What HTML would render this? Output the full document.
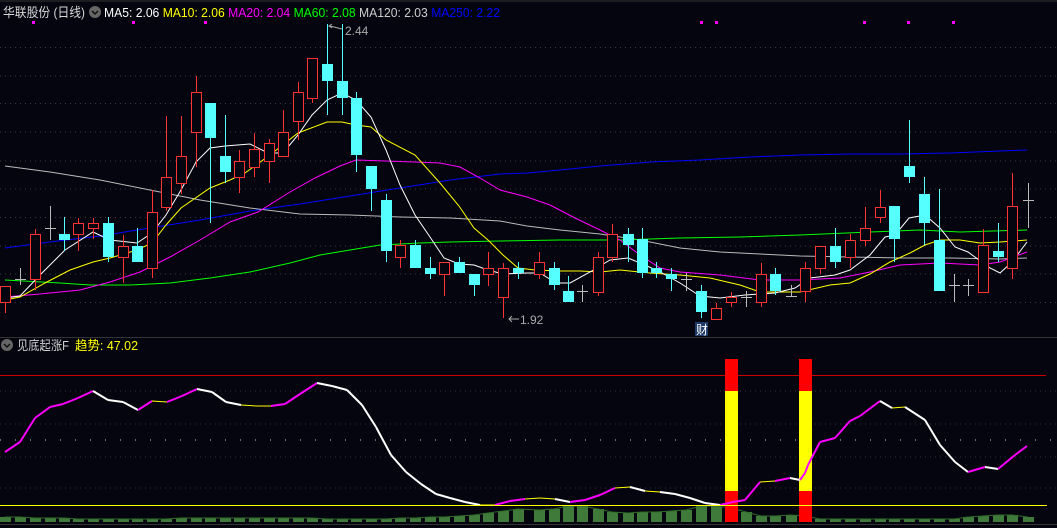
<!DOCTYPE html>
<html><head><meta charset="utf-8">
<style>
html,body{margin:0;padding:0;background:#05050f;width:1057px;height:528px;overflow:hidden}
svg{display:block}
text{font-family:"Liberation Sans","Noto Sans CJK SC",sans-serif}
</style></head><body>
<svg id="s" width="1057" height="528" xmlns="http://www.w3.org/2000/svg">
<rect width="1057" height="528" fill="#05050f"/>
<line x1="0" y1="1" x2="1057" y2="1" stroke="#333" />
<g id="grid"></g>
<g id="ma" fill="none" stroke-width="1"></g>
<g id="cd"></g>
<text x="3" y="17" font-size="13" fill="#d8d8d8" textLength="82" lengthAdjust="spacingAndGlyphs">华联股份 (日线)</text>
<circle cx="95" cy="12" r="6" fill="#666"/><path d="M92 11 L95 14 L98 11" stroke="#111" stroke-width="1.5" fill="none"/>
<text x="104" y="17" font-size="13" textLength="396" lengthAdjust="spacingAndGlyphs"><tspan fill="#fff">MA5: 2.06 </tspan><tspan fill="#ffff00"> MA10: 2.06 </tspan><tspan fill="#ff00ff"> MA20: 2.04 </tspan><tspan fill="#00ff00"> MA60: 2.08 </tspan><tspan fill="#cccccc"> MA120: 2.03 </tspan><tspan fill="#0000ff"> MA250: 2.22</tspan></text>
<g fill="#ff00ff"><rect x="32" y="21" width="3" height="3"/><rect x="132" y="21" width="3" height="3"/><rect x="204" y="21" width="3" height="3"/><rect x="700" y="21" width="3" height="3"/><rect x="715" y="21" width="3" height="3"/><rect x="863" y="21" width="3" height="3"/><rect x="907" y="21" width="3" height="3"/><rect x="952" y="21" width="3" height="3"/></g>
<text x="345" y="35" font-size="12" fill="#aaa">2.44</text>
<path d="M330 26 L342 29" stroke="#aaa" fill="none"/><path d="M332 24 L329 26 L332 28" stroke="#aaa" fill="none"/>
<text x="520" y="324" font-size="12" fill="#aaa">1.92</text>
<path d="M509 319 L519 319 M512 316 L509 319 L512 322" stroke="#aaa" fill="none"/>
<rect x="695" y="322" width="13" height="14" fill="#1e3a66"/>
<text x="696" y="334" font-size="12" fill="#fff">财</text>
<line x1="0" y1="337.5" x2="1057" y2="337.5" stroke="#333"/>
<circle cx="7" cy="345" r="6" fill="#666"/><path d="M4 344 L7 347 L10 344" stroke="#111" stroke-width="1.5" fill="none"/>
<text x="17" y="350" font-size="13" fill="#d0d0d0" textLength="52" lengthAdjust="spacingAndGlyphs">见底起涨F</text>
<text x="75" y="350" font-size="13" fill="#ffff00" textLength="63" lengthAdjust="spacingAndGlyphs">趋势: 47.02</text>
<line x1="0" y1="375.5" x2="1046" y2="375.5" stroke="#cc0000"/>
<g id="ind"></g>
<line x1="0" y1="505.5" x2="1047" y2="505.5" stroke="#ffff00"/>
<line x1="0" y1="524.5" x2="1057" y2="524.5" stroke="#333"/>
</svg>
<script>
var NS="http://www.w3.org/2000/svg";
function el(p,t,a){var e=document.createElementNS(NS,t);for(var k in a)e.setAttribute(k,a[k]);document.getElementById(p).appendChild(e);return e;}
[47.5,76,103.5,132,161,189,217.5,246,274,302.5].forEach(function(y){el("grid","line",{x1:0,x2:1057,y1:y,y2:y,stroke:"#3a3a44","stroke-dasharray":"1,4"});});
[391,424,457,488].forEach(function(y){el("grid","line",{x1:0,x2:1057,y1:y,y2:y,stroke:"#33333c","stroke-dasharray":"1,4"});});
el("grid","line",{x1:0,x2:1057,y1:440,y2:440,stroke:"#ccc","stroke-dasharray":"1,14"});
function pl(c,pts){el("ma","polyline",{stroke:c,points:pts.map(function(p){return p.join(",")}).join(" ")});}
pl("#0000ff",[[5,248],[50,242],[100,236],[150,228],[200,220],[250,211],[300,204],[350,196],[400,188],[450,180],[500,174],[527,173],[560,170],[600,166],[650,162],[700,160],[750,157],[800,155],[850,154],[900,154],[950,153],[1000,151],[1027,150]]);
pl("#bbbbbb",[[5,166],[50,172],[100,180],[150,190],[200,200],[250,208],[300,214],[350,215],[400,217],[450,218],[500,221],[527,226],[560,230],[600,234],[640,240],[680,248],[720,252],[760,254],[800,256],[850,257],[900,258],[950,258],[1000,259],[1027,258]]);
pl("#00ff00",[[5,280],[60,283],[90,285],[130,285],[170,283],[210,278],[250,272],[290,263],[320,255],[350,250],[380,245],[420,243],[450,242],[500,241],[560,240],[620,240],[680,238],[740,237],[800,235],[870,232],[920,230],[960,232],[1027,230]]);
pl("#ff00ff",[[5,297],[40,294],[80,290],[110,282],[140,272],[170,257],[200,240],[230,222],[258,212],[290,192],[315,178],[340,166],[356,160],[385,161],[415,162],[440,163],[460,167],[480,178],[500,190],[527,197],[550,205],[575,218],[600,230],[620,240],[640,255],[660,268],[680,272],[720,275],[760,280],[800,280],[840,278],[870,272],[900,265],[940,263],[980,265],[1000,262],[1027,252]]);
pl("#ffff00",[[5,300],[20,297],[45,283],[70,270],[93,262],[110,258],[137,250],[152,243],[166,225],[181,208],[210,188],[230,180],[245,173],[270,155],[298,133],[327,122],[342,122],[356,125],[371,127],[386,140],[415,155],[440,183],[459,206],[474,228],[488,240],[503,255],[518,268],[535,270],[560,271],[580,271],[600,272],[620,270],[650,273],[680,275],[710,278],[740,285],[760,292],[800,292],[830,285],[850,283],[870,274],[890,262],[910,253],[925,245],[940,240],[960,240],[980,243],[1000,242],[1027,240]]);
pl("#ffffff",[[5,298],[20,296],[40,275],[65,250],[93,232],[110,240],[137,243],[152,233],[166,215],[181,190],[196,162],[210,148],[225,146],[250,144],[268,153],[283,153],[298,135],[312,115],[327,100],[342,93],[356,100],[371,117],[386,150],[400,185],[415,215],[430,237],[444,258],[459,264],[474,265],[488,270],[503,274],[527,273],[540,273],[556,283],[570,283],[590,272],[610,260],[628,258],[645,265],[662,273],[680,283],[700,296],[720,298],[745,295],[775,293],[795,288],[810,278],[835,275],[850,270],[870,255],[885,237],[895,235],[909,218],[925,215],[940,228],[955,247],[968,252],[990,268],[1000,273],[1012,262],[1027,242]]);
var C=[[5,286,302,286,313,"r"],[20,279,279,268,285,"g"],[35,234,279,229,290,"r"],[50,228,228,206,240,"g"],[64,234,240,217,251,"c"],[78,223,234,218,251,"r"],[93,223,228,218,239,"r"],[108,223,257,217,262,"c"],[123,246,257,235,283,"r"],[137,246,262,228,262,"c"],[152,212,268,190,278,"r"],[166,177,207,116,211,"r"],[181,156,183,116,194,"r"],[196,92,132,76,167,"r"],[210,103,138,103,223,"c"],[225,156,172,115,183,"c"],[239,161,177,150,193,"r"],[254,149,167,133,177,"r"],[269,143,161,139,183,"r"],[283,132,156,110,156,"r"],[298,92,121,82,140,"r"],[312,58,98,58,103,"r"],[327,64,81,24,115,"c"],[342,81,98,24,115,"c"],[356,98,155,92,172,"c"],[371,166,189,166,211,"c"],[386,200,251,194,262,"c"],[400,245,257,240,268,"r"],[415,245,268,240,268,"c"],[430,268,274,257,279,"c"],[444,262,274,262,296,"r"],[459,262,273,257,273,"c"],[474,274,285,274,296,"c"],[488,268,274,252,286,"r"],[503,268,297,263,318,"r"],[518,268,273,262,279,"c"],[539,262,274,252,279,"r"],[554,268,285,262,290,"c"],[568,291,302,276,302,"c"],[582,291,291,285,302,"g"],[598,257,292,252,296,"r"],[612,234,257,224,262,"r"],[628,234,245,228,262,"c"],[642,239,273,228,278,"c"],[656,268,273,262,278,"c"],[671,274,279,268,291,"c"],[686,279,279,273,291,"g"],[701,291,312,285,318,"c"],[716,308,319,303,319,"r"],[731,297,302,292,307,"r"],[746,297,297,291,307,"g"],[761,274,302,263,307,"r"],[775,274,291,268,295,"c"],[791,296,296,285,296,"g"],[805,268,291,262,302,"r"],[820,246,268,246,274,"r"],[835,246,262,228,268,"c"],[850,240,257,234,268,"r"],[865,228,240,207,246,"r"],[880,207,217,190,223,"r"],[894,206,239,206,262,"c"],[909,166,177,120,183,"c"],[924,194,223,177,245,"c"],[939,240,291,189,291,"c"],[954,285,285,274,302,"g"],[968,285,285,279,296,"g"],[983,245,292,229,292,"r"],[998,251,257,223,262,"c"],[1012,206,268,173,279,"r"],[1028,200,200,183,228,"g"]];
C.forEach(function(c){var x=c[0],t=c[5];
 if(t=="g"){el("cd","line",{x1:x+.5,x2:x+.5,y1:c[3],y2:c[4],stroke:"#bbb"});el("cd","line",{x1:x-5,x2:x+6,y1:c[1]+.5,y2:c[1]+.5,stroke:"#bbb"});return;}
 var col=t=="r"?"#ff3333":"#55ffff";
 el("cd","line",{x1:x+.5,x2:x+.5,y1:c[3],y2:c[4],stroke:col});
 if(t=="r"){el("cd","rect",{x:x-4.5,y:c[1]+.5,width:10,height:Math.max(1,c[2]-c[1]),fill:"#05050f",stroke:col});}
 else el("cd","rect",{x:x-5,y:c[1],width:11,height:Math.max(1,c[2]-c[1]),fill:col});
});
var tops=[517,517,518,518,518,519,519,519,519,519,519,519,518,518,518,518,518,518,518,518,518,518,519,519,519,519,519,518,518,517,517,516,515,513,511,509,510,509,506,506,509,512,513,512,512,511,510,506,506,508,512,516,516,515,516,519,519,519,519,519,519,519,519,519,519,517,516,515,515,517,517];
C.forEach(function(c,i){var t=tops[i]||518;el("ind","rect",{x:c[0]-5,y:t,width:11,height:522-t,fill:"#3f7a3a"});});
var tl=C.map(function(c,i){return (c[0])+","+(tops[i]||518)}).join(" ");
el("ind","polyline",{points:tl,fill:"none",stroke:"#2f6a2a"});
[725,799].forEach(function(x){el("ind","rect",{x:x,y:359,width:13,height:32,fill:"#ff0000"});el("ind","rect",{x:x,y:391,width:13,height:100,fill:"#ffff00"});el("ind","rect",{x:x,y:491,width:13,height:31,fill:"#ff0000"});});
var P=[[5,452],[20,442],[35,418],[50,407],[63,404],[78,398],[93,391],[108,400],[123,402],[138,410],[152,401],[167,402],[182,396],[197,389],[212,392],[226,402],[241,405],[256,406],[271,406],[285,404],[300,394],[317,383],[332,386],[347,390],[362,405],[376,427],[391,455],[406,472],[421,484],[436,494],[450,498],[465,502],[480,505],[495,505],[510,501],[525,499],[540,498],[555,499],[570,502],[585,500],[600,495],[615,488],[630,487],[645,491],[660,492],[675,494],[690,498],[705,503],[720,505],[733,502],[745,500],[760,482],[775,481],[790,478],[800,480],[805,473],[808,465],[820,442],[835,438],[850,421],[860,416],[880,401],[892,408],[905,407],[925,420],[940,445],[955,462],[968,472],[985,467],[998,469],[1015,455],[1027,446]];
for(var i=1;i<P.length;i++){var d=P[i][1]-P[i-1][1];var col=d<-1.5?"#ff00ff":(d>1.5?"#ffffff":"#ffff00");var w=d<-1.5||d>1.5?2:1;
 el("ind","line",{x1:P[i-1][0],y1:P[i-1][1],x2:P[i][0],y2:P[i][1],stroke:col,"stroke-width":w});}
</script>
</body></html>
